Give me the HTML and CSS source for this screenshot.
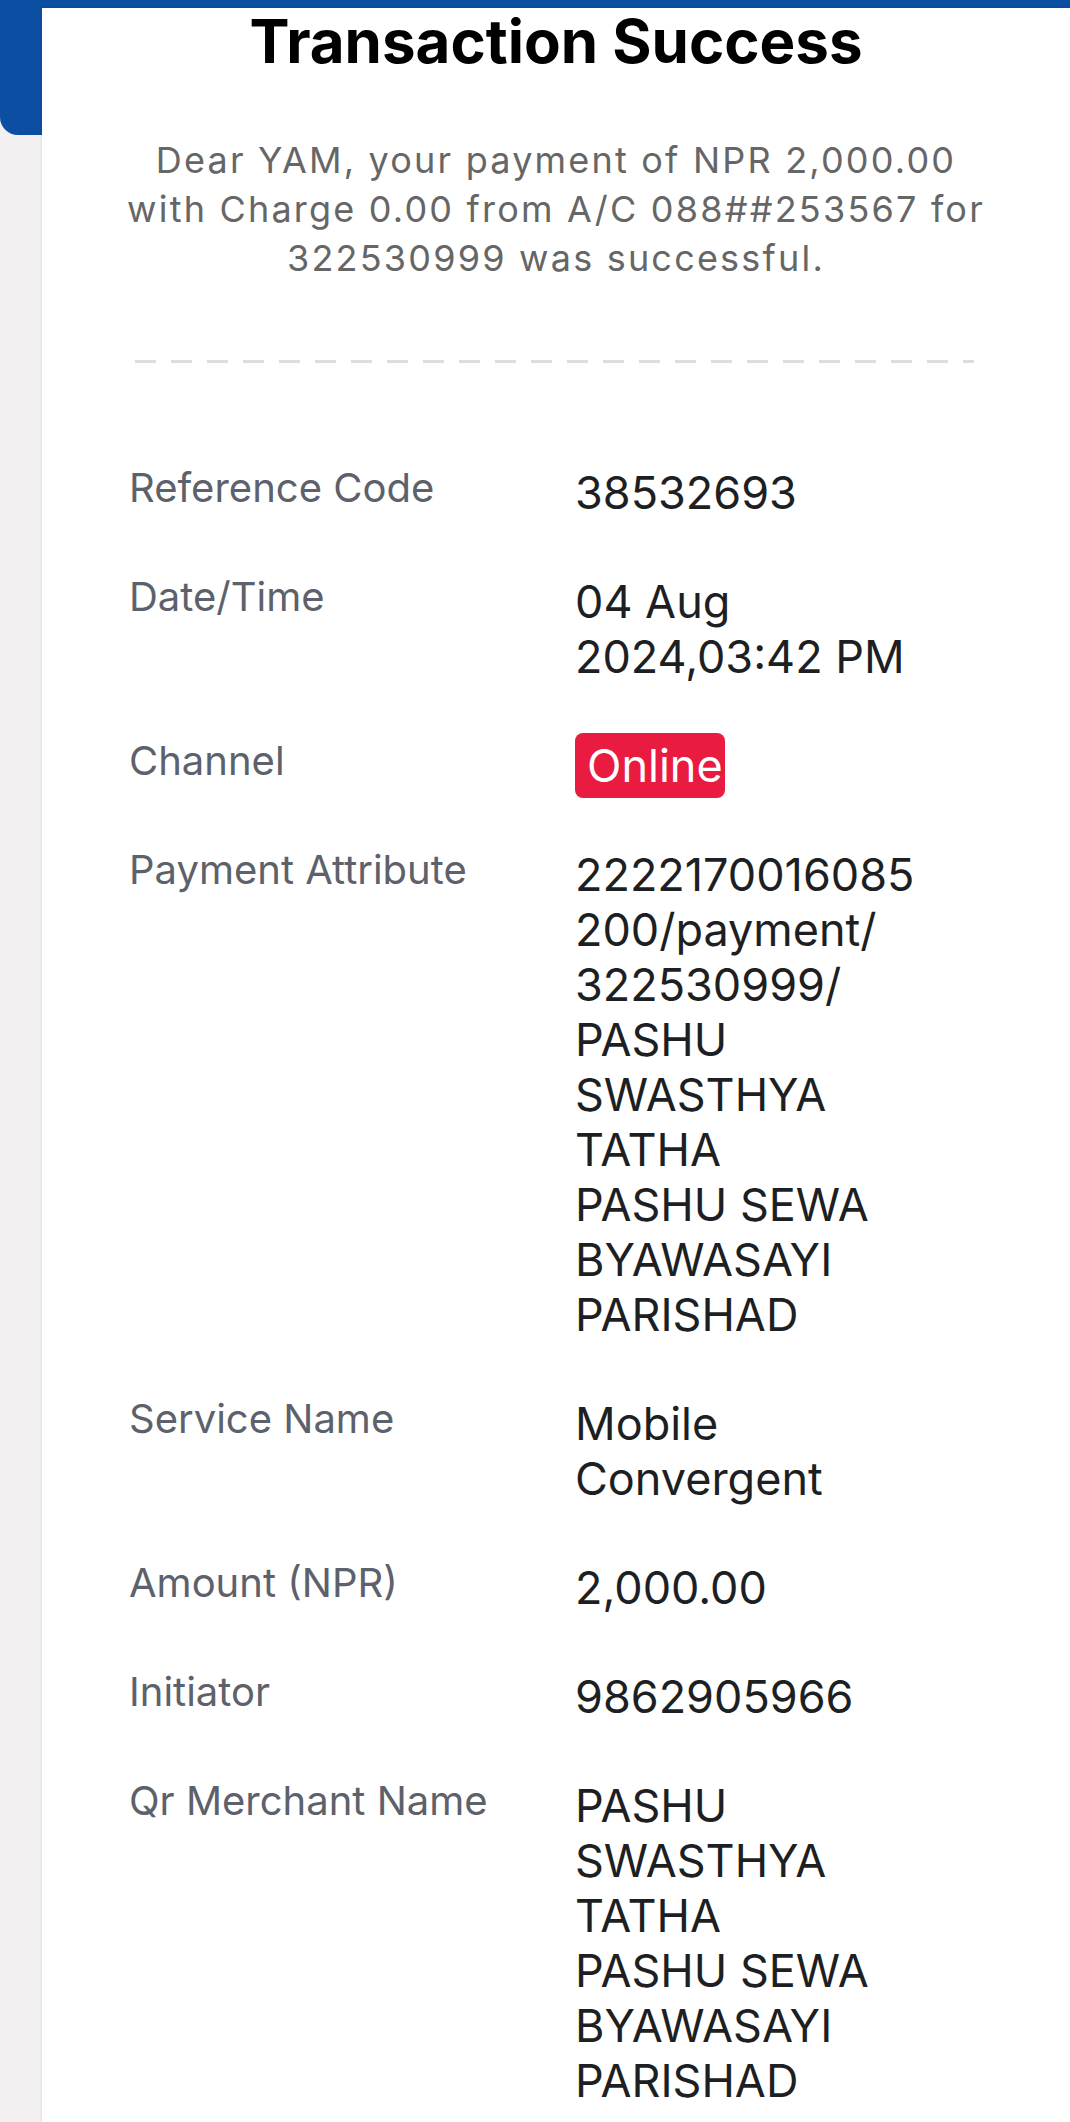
FILE: index.html
```html
<!DOCTYPE html>
<html lang="en">
<head>
  <meta charset="UTF-8">
  <meta name="viewport" content="width=device-width, initial-scale=1.0">
  <title>Transaction Success</title>
  <link rel="stylesheet" href="styles.css">
</head>
<body>

  <!-- Blue app bar behind the receipt -->
  <div class="appbar"></div>

  <main class="receipt">
    <h1>Transaction Success</h1>

    <p class="message">
      Dear YAM, your payment of NPR 2,000.00<br>
      with Charge 0.00 from A/C 088##253567 for<br>
      322530999 was successful.
    </p>

    <div class="divider"></div>

    <!-- Transaction details -->
    <dl class="details">
      <div class="row">
        <dt>Reference Code</dt>
        <dd>38532693</dd>
      </div>
      <div class="row">
        <dt>Date/Time</dt>
        <dd>04 Aug<br>2024,03:42 PM</dd>
      </div>
      <div class="row">
        <dt>Channel</dt>
        <dd><span class="badge">Online</span></dd>
      </div>
      <div class="row">
        <dt>Payment Attribute</dt>
        <dd>2222170016085<br>200/payment/<br>322530999/<br>PASHU<br>SWASTHYA<br>TATHA<br>PASHU SEWA<br>BYAWASAYI<br>PARISHAD</dd>
      </div>
      <div class="row">
        <dt>Service Name</dt>
        <dd>Mobile<br>Convergent</dd>
      </div>
      <div class="row">
        <dt>Amount (NPR)</dt>
        <dd>2,000.00</dd>
      </div>
      <div class="row">
        <dt>Initiator</dt>
        <dd>9862905966</dd>
      </div>
      <div class="row">
        <dt>Qr Merchant Name</dt>
        <dd>PASHU<br>SWASTHYA<br>TATHA<br>PASHU SEWA<br>BYAWASAYI<br>PARISHAD</dd>
      </div>
    </dl>
  </main>

</body>
</html>
```

FILE: styles.css
```css
body {
  margin: 0;
  padding: 0;
  font-family: Inter, "Noto Sans", sans-serif;
  background-color: #f2f0f1;
}

.appbar {
  height: 135px;
  background-color: #0b4ea2;
  border-bottom-left-radius: 18px;
}

.receipt {
  margin: -127px 0 0 42px;
  padding-bottom: 40px;
  background-color: #fff;
  box-shadow: 0 0 3px rgba(0, 0, 0, 0.12);
}

h1 {
  margin: 0;
  text-align: center;
  font-size: 60px;
  line-height: 66px;
  font-weight: 700;
  color: #000;
}

.message {
  margin: 62px 0 0;
  text-align: center;
  font-size: 36px;
  line-height: 49px;
  letter-spacing: 2.2px;
  color: #666;
}

.divider {
  height: 3px;
  margin: 77px 96px 0 93px;
  background-image: linear-gradient(to right, #dddddd 0 21px, transparent 21px 36px);
  background-size: 36px 3px;
}

.details {
  display: flex;
  flex-direction: column;
  gap: 54px;
  margin: 102px 0 0;
  padding-left: 87px;
}

.row {
  display: grid;
  grid-template-columns: 446px 1fr;
  align-items: start;
}

.row dt {
  font-size: 40px;
  line-height: 46px;
  color: #5d616b;
}

.row dd {
  margin: 0;
  font-size: 45px;
  line-height: 55px;
  color: #1d1f23;
}

.badge {
  display: inline-block;
  margin: -5px 0;
  padding: 5px 2px 5px 12px;
  border-radius: 8px;
  background-color: #ea1b40;
  color: #fff;
}
```
